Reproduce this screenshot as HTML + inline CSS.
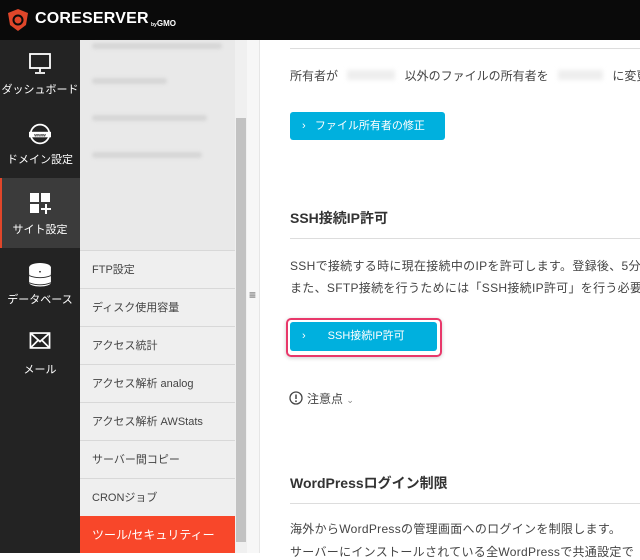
<!DOCTYPE html><html><head><meta charset="utf-8"><style>
*{margin:0;padding:0;box-sizing:border-box}
body{width:640px;height:553px;overflow:hidden;background:#fff;font-family:"Liberation Sans","Noto Sans CJK JP",sans-serif;position:relative}
.a{position:absolute}
.hdr{left:0;top:0;width:640px;height:40px;background:#0a0a0a}
.nav{left:0;top:40px;width:80px;height:513px;background:#232323}
.nl{position:absolute;width:80px;text-align:center;color:#fff;font-size:11px}
.sub{left:80px;top:40px;width:155px;height:513px;background:#efefef}
.si{position:absolute;left:80px;width:155px;height:38px;border-top:1px solid #d8d8d8;font-size:11px;color:#444;padding-left:12px;line-height:38px}
.blur{position:absolute;left:92px;height:6px;background:#d6d6d6;border-radius:3px;filter:blur(1.5px)}
.p{font-size:12px;color:#444;position:absolute;left:290px;white-space:nowrap}
.h{font-size:14px;font-weight:bold;color:#333;position:absolute;left:290px;white-space:nowrap}
.ln{position:absolute;left:290px;width:350px;height:1px;background:#ddd}
.btn{position:absolute;background:#00b0de;color:#fff;font-size:11px;border-radius:3px}
</style></head><body>
<div class="a hdr"></div>
<svg class="a" style="left:6px;top:8px" width="24" height="24" viewBox="0 0 24 24"><path d="M12 1 L22 5 L20 17 L12 23 L4 17 L2 5Z" fill="#e0462a"/><circle cx="12" cy="12" r="5.5" fill="#0a0a0a"/><circle cx="12" cy="12" r="3.5" fill="#e0462a"/></svg>
<div class="a" style="left:35px;top:10px;color:#fff;font-size:16px;font-weight:bold;letter-spacing:0.2px">CORESERVER</div>
<div class="a" style="left:151px;top:19px;color:#fff;font-size:5px;font-weight:bold">by<span style="font-size:8px">GMO</span></div>
<div class="a nav"></div>
<div class="a" style="left:0;top:178px;width:80px;height:70px;background:#3b3b3b;border-left:2px solid #e0462a"></div>
<svg class="a" style="left:29px;top:53px" width="22" height="22" viewBox="0 0 22 22" fill="none" stroke="#fff" stroke-width="1.8"><rect x="1" y="1" width="20" height="14"/><path d="M11 15v4M6 20h10"/></svg>
<div class="nl" style="top:81px">ダッシュボード</div>
<svg class="a" style="left:29px;top:123px" width="22" height="22" viewBox="0 0 20 20"><circle cx="10" cy="10" r="8.5" fill="none" stroke="#fff" stroke-width="1.6"/><rect x="0" y="8" width="20" height="5" fill="#fff"/><text x="10" y="12.3" font-size="4.5" text-anchor="middle" fill="#232323" font-family="Liberation Sans" font-weight="bold">www</text></svg>
<div class="nl" style="top:151px">ドメイン設定</div>
<svg class="a" style="left:30px;top:193px" width="22" height="22" viewBox="0 0 22 22" fill="#fff"><rect x="0" y="0" width="9" height="9"/><rect x="11" y="0" width="9" height="9"/><rect x="0" y="11" width="9" height="9"/><path d="M15 11h2v4h4v2h-4v4h-2v-4h-4v-2h4z"/></svg>
<div class="nl" style="top:221px">サイト設定</div>
<svg class="a" style="left:29px;top:263px" width="22" height="24" viewBox="0 0 20 22" fill="#fff"><ellipse cx="10" cy="4" rx="10" ry="4"/><rect x="0" y="4" width="20" height="6"/><ellipse cx="10" cy="11" rx="10" ry="3.5"/><rect x="0" y="12" width="20" height="6"/><ellipse cx="10" cy="18" rx="10" ry="3.5"/><circle cx="10" cy="8" r="0.8" fill="#232323"/><path d="M0 11.5q10 4 20 0M0 18q10 4 20 0" stroke="#232323" stroke-width="0.8" fill="none"/></svg>
<div class="nl" style="top:291px">データベース</div>
<svg class="a" style="left:29px;top:332px" width="22" height="17" viewBox="0 0 20 16" fill="none" stroke="#fff" stroke-width="1.6"><rect x="1" y="1" width="18" height="14"/><path d="M1 1l9 8 9-8M1 15l7-7M19 15l-7-7"/></svg>
<div class="nl" style="top:361px">メール</div>
<div class="a sub"></div>
<div class="a" style="left:80px;top:40px;width:155px;height:210px;background:#e9e9e9"></div>
<div class="blur" style="top:43px;width:130px"></div>
<div class="blur" style="top:78px;width:75px"></div>
<div class="blur" style="top:115px;width:115px"></div>
<div class="blur" style="top:152px;width:110px"></div>
<div class="si" style="top:250px">FTP設定</div>
<div class="si" style="top:288px">ディスク使用容量</div>
<div class="si" style="top:326px">アクセス統計</div>
<div class="si" style="top:364px">アクセス解析 analog</div>
<div class="si" style="top:402px">アクセス解析 AWStats</div>
<div class="si" style="top:440px">サーバー間コピー</div>
<div class="si" style="top:478px">CRONジョブ</div>
<div class="si" style="top:516px;background:#f8472a;color:#fff;border-top:none;height:37px;font-size:12px">ツール/セキュリティー</div>
<div class="a" style="left:235px;top:40px;width:12px;height:513px;background:#f0f0f0"></div>
<div class="a" style="left:236px;top:118px;width:10px;height:424px;background:#c2c2c2"></div>
<div class="a" style="left:247px;top:40px;width:13px;height:513px;background:#f7f7f7;border-right:1px solid #e6e6e6"></div>
<div class="a" style="left:249px;top:288px;font-size:12px;color:#555">≡</div>
<div class="ln" style="top:48px"></div>
<div class="p" style="top:67px">所有者が <span style="display:inline-block;width:48px;height:10px;background:#eee;filter:blur(2px);margin:0 6px"></span> 以外のファイルの所有者を <span style="display:inline-block;width:45px;height:10px;background:#eee;filter:blur(2px);margin:0 6px"></span> に変更し</div>
<div class="btn" style="left:290px;top:112px;width:155px;height:28px;line-height:28px;padding-left:12px">›&nbsp;&nbsp;&nbsp;ファイル所有者の修正</div>
<div class="h" style="top:208px">SSH接続IP許可</div>
<div class="ln" style="top:238px"></div>
<div class="p" style="top:257px;letter-spacing:0.3px">SSHで接続する時に現在接続中のIPを許可します。登録後、5分</div>
<div class="p" style="top:279px;letter-spacing:0.3px">また、SFTP接続を行うためには「SSH接続IP許可」を行う必要</div>
<div class="a" style="left:286px;top:318px;width:156px;height:39px;border:2px solid #e8386a;border-radius:5px;box-shadow:0 1px 4px rgba(0,0,0,.2)"></div>
<div class="btn" style="left:290px;top:322px;width:147px;height:29px;line-height:29px;padding-left:12px">›<span style="margin-left:22px">SSH接続IP許可</span></div>
<svg class="a" style="left:289px;top:391px" width="14" height="14" viewBox="0 0 14 14"><circle cx="7" cy="7" r="6" fill="none" stroke="#444" stroke-width="1.3"/><path d="M7 3.5v4.5" stroke="#444" stroke-width="1.5"/><circle cx="7" cy="10.2" r="0.9" fill="#444"/></svg>
<div class="p" style="left:307px;top:390px">注意点 <span style="font-size:9px;color:#888">⌄</span></div>
<div class="h" style="top:473px">WordPressログイン制限</div>
<div class="ln" style="top:503px"></div>
<div class="p" style="top:520px;letter-spacing:0.3px">海外からWordPressの管理画面へのログインを制限します。</div>
<div class="p" style="top:543px;letter-spacing:0.3px">サーバーにインストールされている全WordPressで共通設定で</div>
</body></html>
